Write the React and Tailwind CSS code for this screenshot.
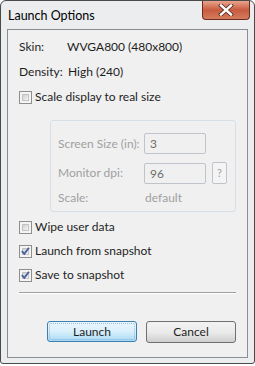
import React from "react";

function Checkbox({ checked }) {
  return (
    <div className="w-[13px] h-[13px] border border-[#8e8f8f] bg-[#f4f4f4] p-[2px] shrink-0">
      <div className="w-full h-full border border-[#c3c3c3] bg-gradient-to-br from-[#cbcfd5] to-[#f6f6f6] flex items-center justify-center">
        {checked && (
          <svg width="9" height="9" viewBox="0 0 9 9" className="overflow-visible">
            <path d="M0.8 4.2 L3.3 6.8 L8 0.8" fill="none" stroke="#4a5f97" strokeWidth="1.8" />
          </svg>
        )}
      </div>
    </div>
  );
}

function CheckRow({ checked, label, className = "" }) {
  return (
    <div className={"flex items-center h-[16px] pl-[11px] " + className}>
      <Checkbox checked={checked} />
      <span className="ml-[3px] text-[#1e1e1e] leading-[16px] whitespace-nowrap">{label}</span>
    </div>
  );
}

export default function App() {
  return (
    <div
      className="w-[255px] h-[366px] bg-white text-[12px]"
      style={{ fontFamily: 'Lato, "Noto Sans", sans-serif' }}
    >
      <div className="w-[255px] h-[364px] bg-[#ebedef] border border-[#4a4a4a] rounded-t-[6px] rounded-b-[3px] flex flex-col relative">
        {/* title bar */}
        <div className="h-[28px] flex items-start pl-[7px] pt-[6px]">
          <span className="text-[12.5px] text-black leading-[18px]">Launch Options</span>
        </div>
        <div className="absolute right-[4px] top-[0px] w-[48px] h-[19px] rounded-b-[4px] border border-[#6b2d22] border-t-0 bg-gradient-to-b from-[#e8a48d] via-[#c75b3f] to-[#d47c5e] flex items-center justify-center">
          <svg width="16" height="12" viewBox="0 0 16 12">
            <path d="M3 1.5 L13 10.5 M13 1.5 L3 10.5" stroke="#5a2a20" strokeWidth="4" strokeLinecap="square" />
            <path d="M3 1.5 L13 10.5 M13 1.5 L3 10.5" stroke="#ffffff" strokeWidth="2.4" strokeLinecap="square" />
          </svg>
        </div>
        {/* client area */}
        <div className="mx-[6px] h-[329px] border border-[#8a8e94] bg-[#f0f0f0] flex flex-col">
          <div className="flex h-[16px] mt-[9px] pl-[11px] leading-[16px] text-[#1e1e1e] whitespace-nowrap">
            <span className="w-[48px]">Skin:</span>
            <span>WVGA800 (480x800)</span>
          </div>
          <div className="flex h-[16px] mt-[9px] pl-[11px] leading-[16px] text-[#1e1e1e] whitespace-nowrap">
            <span className="w-[49px]">Density:</span>
            <span>High (240)</span>
          </div>
          <CheckRow checked={false} label="Scale display to real size" className="mt-[9px]" />
          <div className="ml-[42px] mt-[15px] w-[186px] h-[92px] border border-[#d5dfe5] rounded-[3px] flex flex-col text-[#a0a0a0] whitespace-nowrap">
            <div className="flex items-center mt-[12px] h-[21px]">
              <span className="w-[93px] pl-[7px] leading-[16px]">Screen Size (in):</span>
              <div className="w-[62px] h-[21px] border border-[#bfc4ca] rounded-[2px] bg-[#f0f0f0] pl-[5px] leading-[19px] text-[#6d6d6d]">3</div>
            </div>
            <div className="flex items-center mt-[8px] h-[22px]">
              <span className="w-[93px] pl-[7px] leading-[16px]">Monitor dpi:</span>
              <div className="w-[62px] h-[21px] border border-[#bfc4ca] rounded-[2px] bg-[#f0f0f0] pl-[5px] leading-[19px] text-[#6d6d6d]">96</div>
              <div className="ml-[6px] w-[15px] h-[22px] border border-[#bfc4ca] rounded-[2px] bg-[#f4f4f4] flex items-center justify-center text-[11px] text-[#a0a0a0]">?</div>
            </div>
            <div className="flex items-center mt-[6px] h-[16px]">
              <span className="w-[93px] pl-[7px] leading-[16px]">Scale:</span>
              <span className="leading-[16px] pl-[1px]">default</span>
            </div>
          </div>
          <CheckRow checked={false} label="Wipe user data" className="mt-[7px]" />
          <CheckRow checked={true} label="Launch from snapshot" className="mt-[8px]" />
          <CheckRow checked={true} label="Save to snapshot" className="mt-[8px]" />
          <div className="mx-[11px] mt-[9px] h-[1px] bg-[#a0a0a0] border-b border-white box-content" />
          <div className="flex mt-[27px] pl-[39px] gap-[9px]">
            <div className="w-[90px] h-[21px] rounded-[3px] border border-[#3c7fb1] bg-gradient-to-b from-[#eaf6fd] via-[#d9f0fc] to-[#a7d9f5] p-[1px]">
              <div className="w-full h-full rounded-[2px] border border-dotted border-[#5a8ab0]/50 flex items-center justify-center text-[#1e1e1e] leading-[16px]">
                Launch
              </div>
            </div>
            <div className="w-[90px] h-[22px] rounded-[3px] border border-[#707070] bg-gradient-to-b from-[#f2f2f2] via-[#ebebeb] to-[#cfcfcf] flex items-center justify-center text-[#1e1e1e] leading-[16px]">
              Cancel
            </div>
          </div>
        </div>
      </div>
    </div>
  );
}
